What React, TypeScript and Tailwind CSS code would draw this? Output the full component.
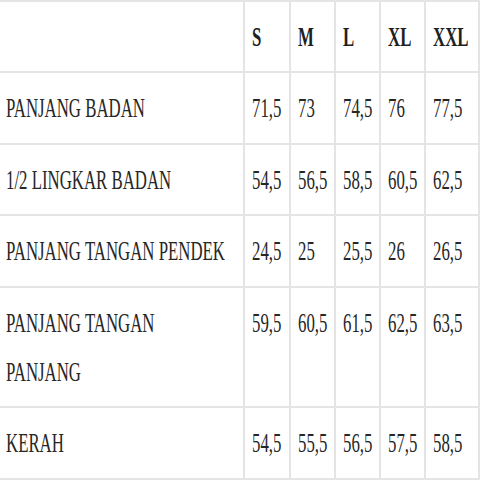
const SIZES = ["S", "M", "L", "XL", "XXL"];

const ROWS: { label: string[]; values: string[] }[] = [
  { label: ["PANJANG BADAN"], values: ["71,5", "73", "74,5", "76", "77,5"] },
  { label: ["1/2 LINGKAR BADAN"], values: ["54,5", "56,5", "58,5", "60,5", "62,5"] },
  { label: ["PANJANG TANGAN PENDEK"], values: ["24,5", "25", "25,5", "26", "26,5"] },
  { label: ["PANJANG TANGAN", "PANJANG"], values: ["59,5", "60,5", "61,5", "62,5", "63,5"] },
  { label: ["KERAH"], values: ["54,5", "55,5", "56,5", "57,5", "58,5"] },
];

// the chart is a squeezed screenshot, so every text run is condensed horizontally
function Squeezed({ children }: { children: React.ReactNode }) {
  return <span className="inline-block origin-left scale-x-[0.6] whitespace-nowrap">{children}</span>;
}

export default function App() {
  return (
    <div className="h-[480px] w-[480px] overflow-hidden bg-white font-['Liberation_Serif','Times_New_Roman',serif]">
      <table className="w-[479px] table-fixed border-collapse text-[28px] leading-[49.4px] text-[#262626]">
        <colgroup>
          <col className="w-[244px]" />
          <col className="w-[46px]" />
          <col className="w-[45px]" />
          <col className="w-[45px]" />
          <col className="w-[45px]" />
          <col className="w-[54px]" />
        </colgroup>
        <thead>
          <tr>
            <th className="border-y-2 border-r-2 border-[#e4e4e4] py-[10px]" />
            {SIZES.map((s) => (
              <th
                key={s}
                className="border-2 border-[#e4e4e4] py-[10px] pl-[7px] text-left align-top font-bold text-[#1f1f1f]"
              >
                <Squeezed>{s}</Squeezed>
              </th>
            ))}
          </tr>
        </thead>
        <tbody>
          {ROWS.map((row) => (
            <tr key={row.label.join(" ")}>
              <td className="border-y-2 border-r-2 border-[#e4e4e4] py-[10px] pl-[6px] align-top">
                {row.label.map((line) => (
                  <div key={line}>
                    <Squeezed>{line}</Squeezed>
                  </div>
                ))}
              </td>
              {row.values.map((v, i) => (
                <td key={i} className="border-2 border-[#e4e4e4] py-[10px] pl-[7px] align-top">
                  <Squeezed>{v}</Squeezed>
                </td>
              ))}
            </tr>
          ))}
        </tbody>
      </table>
    </div>
  );
}
